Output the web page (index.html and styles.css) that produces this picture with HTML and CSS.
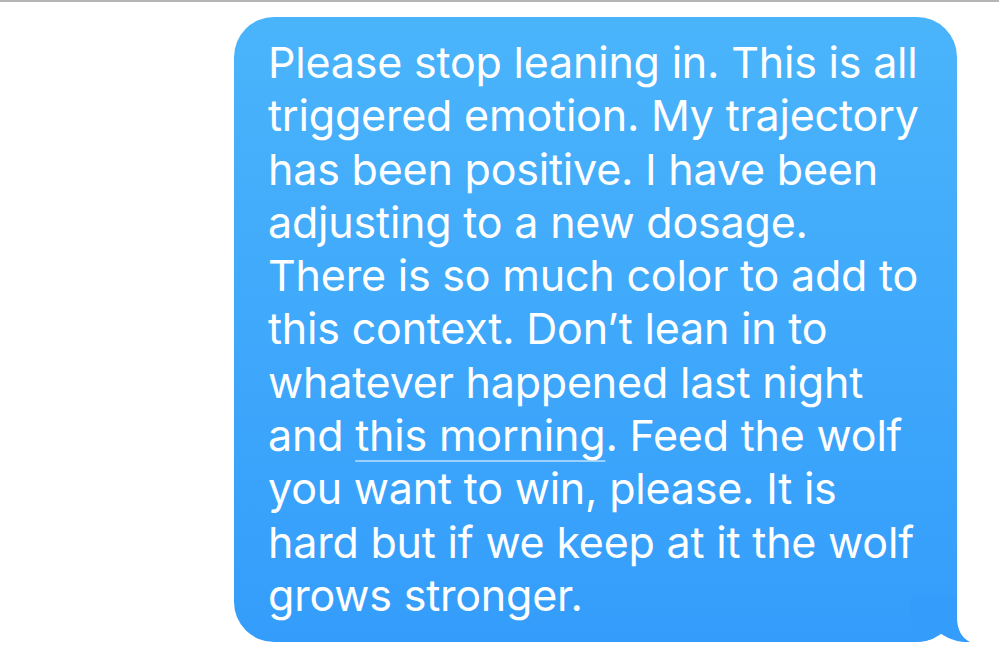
FILE: index.html
```html
<!DOCTYPE html>
<html lang="en">
<head>
<meta charset="utf-8">
<title>Message</title>
<link rel="stylesheet" href="styles.css">
</head>
<body>
<div class="topline"></div>
<div class="thread">
  <div class="bubble">
    <p class="msg">Please stop leaning in. This is all<br>triggered emotion. My trajectory<br>has been positive. I have been<br>adjusting to a new dosage.<br>There is so much color to add to<br>this context. Don’t lean in to<br>whatever happened last night<br>and <span class="link">this morning</span>. Feed the wolf<br>you want to win, please. It is<br>hard but if we keep at it the wolf<br>grows stronger.</p>
    <svg class="tail" width="60" height="45" viewBox="0 0 60 45" aria-hidden="true">
      <path d="M0 0 H47 V20 C47 33 52 41 60 45 C50 46 38 42 30 36 C24 42 16 45 3 45 H0 Z" fill="#349dfb"/>
    </svg>
  </div>
</div>
</body>
</html>
```
FILE: styles.css
```css
html, body {
  margin: 0;
  padding: 0;
  background: #ffffff;
}
body {
  width: 999px;
  height: 657px;
  overflow: hidden;
  font-family: Inter, "Noto Sans", sans-serif;
}
.topline {
  height: 2px;
  background: #b5b5b5;
}
.thread {
  display: flex;
  padding: 15px 0 0 234px;
}
.bubble {
  position: relative;
  width: 723px;
  height: 625px;
  box-sizing: border-box;
  padding: 19px 0 0 34px;
  border-radius: 40px;
  background: linear-gradient(180deg, #4ab4fb 0%, #349dfb 100%);
}
.msg {
  margin: 0;
  color: #ffffff;
  font-size: 43px;
  line-height: 53.3px;
  font-weight: 400;
  letter-spacing: -0.2px;
  white-space: nowrap;
}
.link {
  text-decoration: underline;
  text-decoration-color: rgba(255, 255, 255, 0.5);
  text-decoration-thickness: 2px;
  text-underline-offset: 9px;
}
.tail {
  position: absolute;
  right: -13px;
  bottom: 0;
  display: block;
}
```
